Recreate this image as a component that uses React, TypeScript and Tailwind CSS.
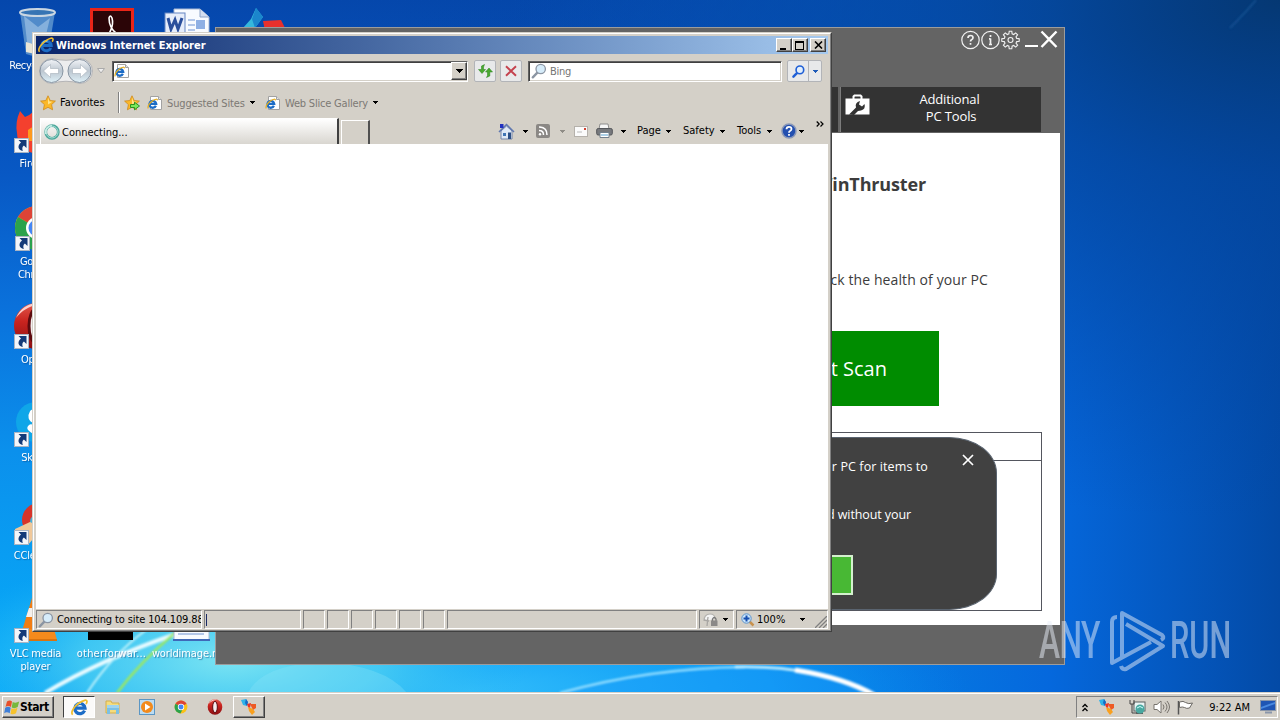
import type { ReactNode } from "react";

const ui = "font-['DejaVu_Sans_Condensed','DejaVu_Sans',sans-serif]";
const segoe = "font-['Open_Sans','Noto_Sans',sans-serif]";

/* ---------- shared icons ---------- */

function IELogo({ size = 16 }: { size?: number }) {
  return (
    <svg width={size} height={size} viewBox="0 0 16 16" className="shrink-0">
      <path d="M12.8 11A4.8 4.8 0 1 1 13.2 8.6H5.2" fill="none" stroke="#1c6cc6" strokeWidth="3" />
      <path d="M4.4 6.800A4 4 0 0 1 9.500 4.200" fill="none" stroke="#8fd4fb" strokeWidth="1.300" />
      <path d="M1.600 14.800C-.8 12.400 3 7 7.600 3.800 11.400 1.200 15.400 0 15 2.600c0 .8-.4 1.600-.8 2.200" fill="none" stroke="#f0bd2c" strokeWidth="1.600" />
    </svg>
  );
}

function IEPage() {
  return (
    <svg width="16" height="16" viewBox="0 0 16 16" className="shrink-0">
      <path d="M3.500 1.500h8l3 3v10h-11z" fill="#fff" stroke="#a2a2a2" />
      <path d="M11.500 1.500v3h3" fill="#e4e4e4" stroke="#a2a2a2" />
      <path d="M8.900 10.800A3.400 3.400 0 1 1 9.200 8.900H3.400" fill="none" stroke="#1c6cc6" strokeWidth="2.300" />
      <path d="M1.300 13.400C.2 11.400 2.600 7.800 5.600 5.800 8 4.200 10.700 3.400 10.400 5.400" fill="none" stroke="#e6ae20" strokeWidth="1.200" />
    </svg>
  );
}

function Caret({ className = "text-black" }: { className?: string }) {
  return (
    <svg width="5" height="3" viewBox="0 0 5 3" shapeRendering="crispEdges" className={`shrink-0 ${className}`}>
      <path d="M0 0h5L2.500 3z" fill="currentColor" />
    </svg>
  );
}

function Magnifier({ stroke = "#8b95a3", fill = "#d6ecfa", size = 16, weight = 1.3 }: { stroke?: string; fill?: string; size?: number; weight?: number }) {
  return (
    <svg width={size} height={size} viewBox="0 0 16 16" className="shrink-0">
      <path d="M6.600 9.400 1.800 14.400" stroke={stroke} strokeWidth={weight + 1} strokeLinecap="round" />
      <circle cx="9.700" cy="6" r="4.700" fill={fill} stroke={stroke} strokeWidth={weight} />
    </svg>
  );
}

function Star({ add = false }: { add?: boolean }) {
  return (
    <svg width="16" height="16" viewBox="0 0 16 16" className="shrink-0">
      <path d="M8 .8l2.200 4.700 5.200.6-3.800 3.500 1 5.200L8 12.300 3.400 14.800l1-5.200L.6 6.100l5.200-.6z" fill="#fbb829" stroke="#cf8a1c" strokeWidth=".8" />
      <path d="M8 2.600l1.400 3.800 3 .4L8 9.500z" fill="#ffe48c" />
      {add && <path d="M6.500 9.500h4V7.200l5 3.800-5 3.800v-2.300h-4z" fill="#7be85a" stroke="#1e8b1c" strokeWidth=".9" />}
    </svg>
  );
}

function ChromeLogo({ size }: { size: number }) {
  return (
    <svg width={size} height={size} viewBox="0 0 48 48">
      <circle cx="24" cy="24" r="22" fill="#fbc116" />
      <path d="M24 24 5 13A22 22 0 0 1 43 13z" fill="#dd4436" />
      <path d="M5 13A22 22 0 0 0 22 46l9-17-7-5z" fill="#2ba24c" />
      <circle cx="24" cy="24" r="11" fill="#fff" />
      <circle cx="24" cy="24" r="8.500" fill="#4486f4" />
    </svg>
  );
}

function OperaLogo({ size }: { size: number }) {
  return (
    <svg width={size} height={size} viewBox="0 0 48 48">
      <defs>
        <linearGradient id="opera" x1="0" y1="0" x2="0" y2="1">
          <stop offset="0" stopColor="#e0564a" />
          <stop offset=".4" stopColor="#c9241f" />
          <stop offset="1" stopColor="#8a0f12" />
        </linearGradient>
      </defs>
      <ellipse cx="24" cy="24" rx="22" ry="23" fill="url(#opera)" />
      <path d="M4 16C9 4 20 0 28 2 17 4 9 9 4 16z" fill="#fbd0cc" />
      <ellipse cx="24" cy="24" rx="7" ry="17" fill="#f4eeee" stroke="#5c0a0e" strokeWidth="3" />
    </svg>
  );
}

function ThrusterLogo({ size }: { size: number }) {
  return (
    <svg width={size} height={size} viewBox="0 0 16 16">
      <path d="M0 1 5 0 7 3 6 7 2 6z" fill="#2fb4ea" />
      <path d="M5 0 7 3 6 7 4 4z" fill="#1769c4" />
      <path d="M6 5 10 4 9 9 7 8z" fill="#e8352c" />
      <path d="M9 5 15 5 15 9 12 11z" fill="#ee5a24" />
      <path d="M7 8 12 10 14 13 11 16 8 12z" fill="#f9a01e" />
    </svg>
  );
}

/* ---------- desktop ---------- */

function Wallpaper() {
  return (
    <svg className="absolute inset-0" width="1280" height="693" viewBox="0 0 1280 693" preserveAspectRatio="none">
      <defs>
        <linearGradient id="sky" x1="0" y1="0" x2="0" y2="1">
          <stop offset="0" stopColor="#0547ac" />
          <stop offset=".25" stopColor="#0858c4" />
          <stop offset=".45" stopColor="#0a72dc" />
          <stop offset=".65" stopColor="#0b90ec" />
          <stop offset="1" stopColor="#06aefa" />
        </linearGradient>
        <linearGradient id="dusk" x1="0" y1="0" x2="1" y2="0">
          <stop offset=".4" stopColor="#0560d0" stopOpacity="0" />
          <stop offset=".82" stopColor="#0566dc" stopOpacity=".97" />
          <stop offset="1" stopColor="#034aa6" />
        </linearGradient>
        <radialGradient id="corner" cx="1" cy="0" r=".75">
          <stop offset="0" stopColor="#053873" />
          <stop offset=".35" stopColor="#04449a" stopOpacity=".75" />
          <stop offset="1" stopColor="#0448a8" stopOpacity="0" />
        </radialGradient>
        <radialGradient id="glow">
          <stop offset="0" stopColor="#7be4f2" />
          <stop offset=".5" stopColor="#4fd2f2" stopOpacity=".75" />
          <stop offset="1" stopColor="#1ab0f5" stopOpacity="0" />
        </radialGradient>
        <radialGradient id="haze">
          <stop offset="0" stopColor="#32bcfa" />
          <stop offset=".6" stopColor="#14a0f8" stopOpacity=".7" />
          <stop offset="1" stopColor="#0a80f0" stopOpacity="0" />
        </radialGradient>
        <filter id="soft"><feGaussianBlur stdDeviation="1.1" /></filter>
      </defs>
      <rect width="1280" height="693" fill="url(#sky)" />
      <rect width="1280" height="693" fill="url(#dusk)" />
      <rect width="1280" height="693" fill="url(#corner)" />
      <ellipse cx="470" cy="690" rx="500" ry="100" fill="url(#haze)" />
      <ellipse cx="230" cy="660" rx="300" ry="110" fill="url(#glow)" />
      <path d="M248 693Q262 664 325 662 385 666 407 693z" fill="#8fe6fa" opacity=".3" />
      <path d="M560 693Q650 668 745 667 820 668 876 693z" fill="#1a98fa" opacity=".4" />
      <g fill="none" filter="url(#soft)">
        <path d="M45 693Q100 660 176 634" stroke="#e8fbff" strokeWidth="4" />
        <path d="M87 693Q112 655 146 630" stroke="#bff2fb" strokeWidth="2" />
        <path d="M117 693Q140 662 176 632" stroke="#9be860" strokeWidth="2.500" />
        <path d="M560 693Q650 668 745 667" stroke="#8fdcff" strokeWidth="2.500" />
        <path d="M735 667Q780 666 810 673" stroke="#c4efff" strokeWidth="3" />
        <path d="M795 670Q845 678 874 695" stroke="#fff" strokeWidth="5" />
        <path d="M1230 28Q1246 12 1256 0" stroke="#2a66a8" strokeWidth="1.500" opacity=".6" />
      </g>
    </svg>
  );
}

function ShortcutArrow() {
  return (
    <svg className="absolute left-[2px] top-[32px]" width="15" height="15" viewBox="0 0 15 15">
      <rect x=".5" y=".5" width="14" height="14" fill="#f4f6fa" stroke="#a9b4c4" />
      <path d="M4.500 2h8v8L9.900 7.600C8.200 8.800 8 10.600 8.800 13 4 12.400 3 7.800 7 4.600z" fill="#143a78" />
    </svg>
  );
}

type DesktopIconProps = { place: string; label: string; spacing?: string; shortcut?: boolean; children: ReactNode };

function DesktopIcon({ place, label, spacing = "tracking-[-0.1px]", shortcut, children }: DesktopIconProps) {
  return (
    <div className={`absolute flex w-[75px] flex-col items-center text-center ${place}`}>
      <div className="relative h-[48px] w-[48px]">
        {children}
        {shortcut && <ShortcutArrow />}
      </div>
      <span className={`mt-[3px] whitespace-pre text-[11px] leading-[13px] text-white [text-shadow:1px_1px_1px_#0a3c7880] ${spacing}`}>{label}</span>
    </div>
  );
}

function WordDoc() {
  return (
    <svg width="48" height="48" viewBox="0 0 48 48">
      <path d="M10 1h26l9 8v35H10z" fill="#f8fbff" stroke="#a8b8d4" />
      <path d="M36 1v8h9" fill="#d3def0" stroke="#8ea4c8" />
      <path d="M24 12h7M24 17h7M24 22h7M14 28h26M14 33h26M14 38h26" stroke="#6f93d2" />
      <rect x="32" y="12" width="9" height="9" fill="#8fb0e4" />
      <rect x="1" y="5" width="20" height="20" fill="#e6edfa" stroke="#6485c2" />
      <path d="M4 10l3 11 4-9 3 9 4-11" fill="none" stroke="#2a4f9c" strokeWidth="3" />
      <path d="M9 44h37" stroke="#3f69b8" strokeWidth="2" />
    </svg>
  );
}

function DesktopIcons() {
  return (
    <>
      <DesktopIcon place="left-[-2px] top-[8px]" label="Recycle Bin" spacing="tracking-[-0.4px]">
        <svg width="48" height="48" viewBox="0 0 48 48">
          <path d="M8 4 14 46Q24 50 36 46L43 4z" fill="#5f97cf" opacity=".85" />
          <path d="M12 8l4 34 8-14 6 16 8-34-12 9z" fill="#b9d5ee" opacity=".5" />
          <ellipse cx="25.500" cy="4.500" rx="17.500" ry="3.500" fill="#3674b4" stroke="#c9d6e2" strokeWidth="2" />
          <path d="M14 34l7 2 2 10-9-2z" fill="#e9e5d6" />
        </svg>
      </DesktopIcon>
      <DesktopIcon place="left-[74px] top-[8px]" label="">
        <svg width="48" height="48" viewBox="0 0 48 48">
          <rect x="3.500" y="1.500" width="41" height="44" fill="#2b0507" stroke="#ea2518" strokeWidth="3" />
          <path d="M16 31C22 27 26 17 24 10q-2-4-3 0c0 8 4 13 8 16" fill="none" stroke="#fff" strokeWidth="1.600" />
        </svg>
      </DesktopIcon>
      <DesktopIcon place="left-[150px] top-[8px]" label=""><WordDoc /></DesktopIcon>
      <DesktopIcon place="left-[225px] top-[8px]" label="">
        <svg width="48" height="48" viewBox="0 0 48 48">
          <path d="M17 0l7 9-8 11H4l8-9z" fill="#35b8dc" />
          <path d="M17 0l7 9-8 11-3-9z" fill="#1b86cc" />
          <path d="M24 13l18-1 4 8-10 9-10-6z" fill="#e8302c" />
        </svg>
      </DesktopIcon>
      <DesktopIcon place="left-[-2px] top-[106px]" label="Firefox" shortcut>
        <svg width="48" height="48" viewBox="0 0 48 48">
          <path d="M8 5l5 6q5-2 8-5 0 5 4 7 22-6 21 14a20 20 0 0 1-41 0Q3 16 8 5z" fill="#f4402e" />
          <path d="M16 24q6-6 14 0l-6 5 8 6H16z" fill="#ff9a1e" />
        </svg>
      </DesktopIcon>
      <DesktopIcon place="left-[-1px] top-[204px]" label={"Google\nChrome"} spacing="tracking-[-0.3px]" shortcut><ChromeLogo size={48} /></DesktopIcon>
      <DesktopIcon place="left-[-2px] top-[302px]" label="Opera" spacing="tracking-[-0.3px]" shortcut><OperaLogo size={48} /></DesktopIcon>
      <DesktopIcon place="left-[-2px] top-[400px]" label="Skype" spacing="tracking-[-0.3px]" shortcut>
        <svg width="48" height="48" viewBox="0 0 48 48">
          <circle cx="24" cy="22" r="20" fill="#0fa6e8" />
          <path d="M32 13q-6-4-11 0-3 5 2 7l7 2q5 4 0 8-6 3-11-2" fill="none" stroke="#fff" strokeWidth="7" strokeLinecap="round" />
        </svg>
      </DesktopIcon>
      <DesktopIcon place="left-[-2px] top-[498px]" label="CCleaner" spacing="tracking-[-0.2px]" shortcut>
        <svg width="48" height="48" viewBox="0 0 48 48">
          <circle cx="27" cy="22" r="17" fill="#d8342a" />
          <circle cx="27" cy="24" r="9" fill="#4ab2da" />
          <path d="M3 31 18 24l12 6-14 17H3z" fill="#f0c89a" />
        </svg>
      </DesktopIcon>
      <DesktopIcon place="left-[-2px] top-[596px]" label={"VLC media\nplayer"} spacing="tracking-[-0.2px]" shortcut>
        <svg width="48" height="48" viewBox="0 0 48 48">
          <path d="M20 2h8l10 33H10z" fill="#f27d13" />
          <path d="M17 12h14l3 9H14z" fill="#f4f0ec" />
          <path d="M8 33h34l3 11H3z" fill="#f58a1c" />
          <path d="M3 44h42" stroke="#d9730f" strokeWidth="2" />
        </svg>
      </DesktopIcon>
      <DesktopIcon place="left-[74px] top-[596px]" label="otherforwar..." spacing="tracking-[0.2px]">
        <div className="h-[44px] w-[45px] bg-black" />
      </DesktopIcon>
      <DesktopIcon place="left-[150px] top-[596px]" label="worldimage.rtf" spacing="tracking-[-0.1px]"><WordDoc /></DesktopIcon>
    </>
  );
}

/* ---------- WinThruster ---------- */

function ThrusterHeader() {
  return (
    <div className="flex h-[59px] items-start justify-end gap-[1px] pr-[5px] pt-[2px] text-[#f2f2f2]">
      <svg width="19" height="20" viewBox="0 0 19 20" fill="none" stroke="currentColor">
        <circle cx="9.500" cy="10" r="8.700" strokeWidth="1.200" />
        <path d="M7 8q0-2.500 2.500-2.500T12 7.700q0 1.300-1.500 2-1 .6-1 1.800M9.500 13v1.800" strokeWidth="1.700" />
      </svg>
      <svg width="19" height="20" viewBox="0 0 19 20" fill="none" stroke="currentColor">
        <circle cx="9.500" cy="10" r="8.700" strokeWidth="1.200" />
        <path d="M9.500 8.500v6M9.500 5v2M8 8.800h1.500M8 14.500h3" strokeWidth="1.700" />
      </svg>
      <svg width="19" height="20" viewBox="0 0 19 20" fill="none" stroke="currentColor" strokeWidth="1.100" className="mr-px">
        <path d="M8.200 1.300h2.600l.3 2.500 1.600.7 2-1.600 1.900 1.900-1.600 2 .7 1.600 2.500.3v2.600l-2.500.3-.7 1.600 1.600 2-1.900 1.900-2-1.600-1.600.7-.3 2.500H8.200l-.3-2.500-1.600-.7-2 1.600-1.900-1.900 1.600-2-.7-1.600-2.500-.3V8.700l2.500-.3.700-1.600-1.600-2 1.900-1.900 2 1.600 1.600-.7z" />
        <circle cx="9.500" cy="10" r="2.500" />
      </svg>
      <svg width="16" height="20" viewBox="0 0 16 20"><path d="M3 16h13" stroke="#fff" strokeWidth="2" /></svg>
      <svg width="20" height="20" viewBox="0 0 20 20"><path d="M2.500 1.500l15 15.500M17.500 1.500l-15 15.500" stroke="#fff" strokeWidth="2.400" /></svg>
    </div>
  );
}

function ThrusterWindow() {
  return (
    <div className={`absolute left-[215px] top-[27px] flex h-[638px] w-[850px] flex-col border border-[#9c9c9c] bg-[#646464] ${segoe}`}>
      <ThrusterHeader />
      <div className="flex h-[46px] justify-end gap-[3px] pr-[23px] pb-px text-white">
        <div className="w-[199px] bg-[#333]" />
        <div className="flex w-[200px] items-start bg-[#333] pl-[4px] pt-[7px] shadow-[-1px_0_0_#7c7c7c]">
          <svg width="25" height="22" viewBox="0 0 25 22" className="shrink-0">
            <path d="M8.500 5V2.500l1-1h6l1 1V5" fill="none" stroke="#fff" strokeWidth="2" />
            <path d="M.5 4.500h24v16H.5z" fill="#fff" />
            <path d="M4 20.500l7-7q-1.500-5 4-6.500l-1 3.500 3 2 2.500-2.500q1.500 5-3.500 6.500l-3 .5-4 4z" fill="#333" />
          </svg>
          <div className="-mt-[3px] ml-[2px] flex-1 whitespace-pre pr-[14px] text-center text-[13px] leading-[17px] tracking-[-0.150px]">{"Additional\n PC Tools"}</div>
        </div>
      </div>
      <div className="mr-[4px] ml-[4px] flex h-[492px] flex-col bg-white pr-[18px] text-[#3c3c3c]">
        <div className="mt-[37px] h-[28px] pr-[116px] text-right text-[18px] font-bold leading-[28px] tracking-[-0.150px]">WinThruster</div>
        <div className="mt-[70px] h-[24px] pr-[54px] text-right text-[14px] leading-[24px] tracking-[0.1px]">Check the health of your PC</div>
        <div className="mt-[39px] mr-[103px] flex h-[75px] w-[230px] items-center justify-end self-end bg-[#008c00] pr-[52px] text-[20px] text-white">Start Scan</div>
        <div className="relative mt-[26px] h-[179px] border border-[#54565e]">
          <div className="h-[28px] border-b border-[#54565e]" />
          <div className="absolute right-[44px] top-[4px] flex h-[173px] w-[400px] flex-col rounded-[48px/36px] border border-[#5a6470] bg-[#414141] text-[12.500px] leading-[18px] text-white">
            <div className="mt-[20px] pr-[68px] text-right tracking-[0.1px]">scan your PC for items to</div>
            <div className="mt-[30px] pr-[85px] text-right tracking-[-0.1px]">removed without your</div>
            <div className="mt-[31px] mr-[143px] h-[40px] w-[120px] self-end border-2 border-[#d4f0ce] bg-[#48b834]" />
            <svg className="absolute right-[22px] top-[16px]" width="12" height="12" viewBox="0 0 12 12">
              <path d="M1 1l10 10M11 1 1 11" stroke="#fff" strokeWidth="1.700" />
            </svg>
          </div>
        </div>
      </div>
    </div>
  );
}

/* ---------- Internet Explorer ---------- */

function CaptionButton({ children }: { children: ReactNode }) {
  return (
    <div className="flex h-[14px] w-[16px] items-center justify-center border border-b-[#404040] border-l-white border-r-[#404040] border-t-white bg-[#d4d0c8] shadow-[inset_-1px_-1px_0_#808080]">
      {children}
    </div>
  );
}

function TitleBar() {
  return (
    <div className="flex h-[18px] items-center bg-gradient-to-r from-[#0a246a] to-[#a6caf0] pl-[2px] pr-[2px]">
      <IELogo />
      <span className="ml-[2px] flex-1 whitespace-nowrap pt-px text-[11px] font-bold leading-[18px] text-white">Windows Internet Explorer</span>
      <CaptionButton><svg width="10" height="9" viewBox="0 0 10 9" shapeRendering="crispEdges"><path d="M1 7h6v2H1z" /></svg></CaptionButton>
      <CaptionButton>
        <svg width="10" height="9" viewBox="0 0 10 9" shapeRendering="crispEdges"><path d="M0 0h9v9H0zM1 2v6h7V2z" fillRule="evenodd" /></svg>
      </CaptionButton>
      <div className="ml-[2px]">
        <CaptionButton><svg width="9" height="8" viewBox="0 0 9 8"><path d="M1 .5l7 7M8 .5l-7 7" stroke="#000" strokeWidth="1.600" /></svg></CaptionButton>
      </div>
    </div>
  );
}

function NavArrows() {
  return (
    <svg width="56" height="28" viewBox="0 0 56 28" className="shrink-0">
      <defs>
        <linearGradient id="orb" x1="0" y1="0" x2="0" y2="1">
          <stop offset="0" stopColor="#f2f4f7" />
          <stop offset=".5" stopColor="#bcc6d0" />
          <stop offset="1" stopColor="#dff1f8" />
        </linearGradient>
      </defs>
      <path d="M14 1.500Q28 5 42 1.500A12.500 12.500 0 0 1 42 26.500Q28 22 14 26.500A12.500 12.500 0 0 1 14 1.500z" fill="#ededee" stroke="#b4b4b6" />
      <circle cx="13.500" cy="14" r="11.500" fill="url(#orb)" stroke="#8794a2" />
      <circle cx="41.500" cy="14" r="11.500" fill="url(#orb)" stroke="#8794a2" />
      <path d="M5.500 14l7-6.500v4h8v5h-8v4zM49.500 14l-7-6.500v4h-8v5h8v4z" fill="#fff" stroke="#a6b0ba" strokeWidth=".6" />
    </svg>
  );
}

const field = "flex items-center border border-b-white border-l-[#606060] border-r-white border-t-[#606060] bg-white shadow-[inset_1px_1px_0_#404040,inset_-1px_-1px_0_#d4d0c8]";
const toolButton = "flex h-[22px] items-center justify-center rounded-[2px] border border-[#b2b4b8] bg-[#e8e9ea]";

function AddressRow() {
  return (
    <div className="flex h-[34px] items-center pl-[2px]">
      <NavArrows />
      <svg width="8" height="6" viewBox="0 0 8 6" className="ml-[3px]"><path d="M.5.500h7l-3.500 4.500z" fill="#eee" stroke="#aaa" /></svg>
      <div className={`ml-[7px] h-[21px] w-[356px] pl-px ${field}`}>
        <IEPage />
        <div className="mr-0 ml-auto flex h-[18px] w-[16px] items-center justify-center border border-b-[#404040] border-l-white border-r-[#404040] border-t-white bg-[#d4d0c8] shadow-[inset_-1px_-1px_0_#808080]">
          <svg width="7" height="4" viewBox="0 0 7 4" shapeRendering="crispEdges"><path d="M0 0h7L3.500 4z" /></svg>
        </div>
      </div>
      <div className={`ml-[6px] w-[22px] ${toolButton}`}>
        <svg width="15" height="14" viewBox="0 0 15 14">
          <path d="M6.500.500 3.500 2v3.500H.5L4 9.500l3.500-4H5.500V3z" fill="#49a92e" stroke="#24801a" strokeWidth=".5" />
          <path d="M8.500 13.500 11.800 12V8h2.700L11 4 7.500 8h2v3.500z" fill="#49a92e" stroke="#24801a" strokeWidth=".5" />
        </svg>
      </div>
      <div className={`ml-[4px] w-[22px] ${toolButton}`}>
        <svg width="12" height="12" viewBox="0 0 12 12"><path d="M1 1.200l10 9.600M11 1.200 1 10.800" stroke="#c4424e" strokeWidth="1.900" /></svg>
      </div>
      <div className={`ml-[6px] h-[21px] w-[254px] pl-[2px] ${field}`}>
        <Magnifier />
        <span className="ml-[3px] pt-[3px] text-[11px] tracking-[-0.3px] text-[#757575]">Bing</span>
      </div>
      <div className={`ml-[5px] w-[35px] ${toolButton}`}>
        <span className="flex h-full w-[21px] items-center justify-center border-r border-[#b2b4b8]"><Magnifier stroke="#1f5fd6" fill="#e2effc" size={13} weight={2} /></span>
        <span className="flex flex-1 justify-center"><Caret className="text-[#1e5bb8]" /></span>
      </div>
    </div>
  );
}

function FavoritesRow() {
  return (
    <div className="flex h-[29px] items-center pl-[4px] text-[11px]">
      <Star />
      <span className="ml-[4px] w-[50px] whitespace-nowrap pt-px text-black">Favorites</span>
      <span className="ml-[8px] h-[21px] w-[2px] border-l border-r border-l-[#808080] border-r-white" />
      <span className="ml-[4px]"><Star add /></span>
      <span className="ml-[7px]"><IEPage /></span>
      <span className="ml-[4px] w-[79px] whitespace-nowrap pt-[3px] tracking-[-0.150px] text-[#7c7974]">Suggested Sites</span>
      <span className="ml-[4px]"><Caret /></span>
      <span className="ml-[10px]"><IEPage /></span>
      <span className="ml-[4px] w-[84px] whitespace-nowrap pt-[3px] tracking-[-0.2px] text-[#7c7974]">Web Slice Gallery</span>
      <span className="ml-[4px]"><Caret /></span>
    </div>
  );
}

function CommandBar() {
  return (
    <div className="flex h-[26px] flex-1 items-center justify-end pr-[4px] text-[11px] text-black">
      <svg width="17" height="17" viewBox="0 0 17 17">
        <path d="M3 8v8h11V8L8.500 3z" fill="#dfe9f6" stroke="#7686a8" />
        <path d="M1 9l7.500-7.500L16 9" fill="none" stroke="#6078b0" strokeWidth="1.500" />
        <path d="M2 1h3.500v4H2z" fill="#2030c0" />
        <path d="M10 9.500h3V16h-3z" fill="#2c4f86" /><path d="M5 10h3v3H5z" fill="#3f74b4" />
      </svg>
      <span className="ml-[8px]"><Caret /></span>
      <svg width="14" height="14" viewBox="0 0 14 14" className="ml-[8px]">
        <rect width="14" height="14" rx="2" fill="#8b8885" />
        <path d="M3 6.500q4.500 0 4.500 4.500M3 3q8 0 8 8" fill="none" stroke="#fff" strokeWidth="1.500" />
        <circle cx="4" cy="10.300" r="1.200" fill="#fff" />
      </svg>
      <span className="ml-[10px]"><Caret className="text-[#8f8c86]" /></span>
      <svg width="14" height="11" viewBox="0 0 14 11" className="ml-[9px]">
        <rect x=".5" y=".5" width="13" height="10" fill="#fbfbfb" stroke="#b5b1ab" />
        <path d="M10 2h2v2h-2z" fill="#d04030" /><path d="M3 6h5" stroke="#bbb" />
      </svg>
      <svg width="17" height="16" viewBox="0 0 17 16" className="ml-[8px]">
        <path d="M4 1h8l1 5H3z" fill="#f6f6f6" stroke="#8c8c8c" />
        <rect x=".7" y="5.500" width="15.600" height="6.500" rx="1.500" fill="#77797d" stroke="#55575b" />
        <path d="M4 9.500h9v5H4z" fill="#fff" stroke="#73808d" /><path d="M5 12h7" stroke="#58a0d0" />
      </svg>
      <span className="ml-[8px]"><Caret /></span>
      <span className="ml-[11px] w-[25px]">Page</span>
      <span className="ml-[4px]"><Caret /></span>
      <span className="ml-[12px] w-[33px]">Safety</span>
      <span className="ml-[4px]"><Caret /></span>
      <span className="ml-[12px] w-[27px]">Tools</span>
      <span className="ml-[3px]"><Caret /></span>
      <svg width="16" height="16" viewBox="0 0 16 16" className="ml-[9px]">
        <circle cx="8" cy="8" r="7" fill="#2450b0" stroke="#8a98b8" strokeWidth="1.500" />
        <path d="M5.500 6.300q0-2.500 2.500-2.500t2.500 2.200q0 1.200-1.500 2Q8 8.500 8 9.700M8 11v1.800" fill="none" stroke="#fff" strokeWidth="1.800" />
      </svg>
      <span className="ml-[2px]"><Caret /></span>
      <svg width="8" height="6" viewBox="0 0 8 6" className="-mt-[14px] ml-[12px]"><path d="M.7.500 3.200 3 .7 5.500M4.500.500 7 3 4.500 5.500" fill="none" stroke="#000" strokeWidth="1.200" /></svg>
    </div>
  );
}

function TabRow() {
  return (
    <div className="flex h-[27px] items-end pl-[4px]">
      <div className="flex h-[26px] w-[299px] items-center border-l border-r-2 border-t border-l-white border-r-[#404040] border-t-white bg-gradient-to-b from-white to-[#d9d6d0] pl-[3px] text-[11px] text-black">
        <svg width="16" height="16" viewBox="0 0 16 16">
          <circle cx="8" cy="8" r="6.300" fill="none" stroke="#4aa69a" strokeWidth="2.800" />
          <circle cx="8" cy="8" r="6" fill="none" stroke="#a5dcd2" strokeWidth="1" />
          <path d="M8 1.700A6.300 6.300 0 0 0 2 10" fill="none" stroke="#c4ece4" strokeWidth="1.800" />
        </svg>
        <span className="ml-[2px] pt-[3px]">Connecting...</span>
      </div>
      <div className="ml-[2px] h-[24px] w-[29px] border-l border-r-2 border-t border-l-white border-r-[#505050] border-t-white" />
      <CommandBar />
    </div>
  );
}

const well = "h-[19px] border border-b-white border-l-[#808080] border-r-white border-t-[#808080]";

function StatusBar() {
  return (
    <div className="flex h-[20px] items-center pt-px text-[11px] text-black">
      <div className={`flex w-[166px] items-center overflow-hidden whitespace-nowrap pl-[1px] ${well}`}>
        <Magnifier />
        <span className="ml-[3px] pt-px tracking-[-0.120px]">Connecting to site 104.109.88</span>
      </div>
      <div className={`ml-[2px] flex w-[97px] items-center pl-px ${well}`}><span className="h-[12px] w-px bg-[#1c2c66]" /></div>
      {[0, 1, 2, 3, 4, 5].map((i) => (
        <div key={i} className={`ml-[2px] w-[22px] ${well}`} />
      ))}
      <div className={`ml-[2px] w-[250px] ${well}`} />
      <div className={`ml-[2px] flex w-[35px] items-center pl-[3px] ${well}`}>
        <svg width="16" height="15" viewBox="0 0 16 15">
          <path d="M1 9q0-7 6-7 5 0 5 5" fill="#f4f4f4" stroke="#b4b2ae" strokeWidth="1.200" />
          <path d="M4 14 5 5M1 8l5 1" stroke="#a8a6a3" strokeWidth="1.300" />
          <path d="M9.500 9V7q1.800-3 3.500 0v2" fill="none" stroke="#777" strokeWidth="1.300" /><rect x="8" y="8.500" width="6.500" height="5.500" fill="#8b8987" />
        </svg>
        <span className="ml-[4px]"><Caret /></span>
      </div>
      <div className={`ml-[2px] flex flex-1 items-center pl-[4px] ${well}`}>
        <svg width="14" height="14" viewBox="0 0 14 14">
          <path d="M8 8l4.500 4.500" stroke="#c8924e" strokeWidth="2.500" />
          <circle cx="5.500" cy="5.500" r="4.700" fill="#c9e4fa" stroke="#5c93cc" /><path d="M5.500 2.500v6M2.500 5.500h6" stroke="#174fb0" strokeWidth="2" />
        </svg>
        <span className="ml-[2px] w-[31px] pt-px">100%</span>
        <span className="ml-[12px]"><Caret /></span>
        <svg width="12" height="12" viewBox="0 0 12 12" className="mt-auto ml-auto"><path d="M0 12 12 0M4 12l8-8M8 12l4-4" stroke="#808080" strokeWidth="1.300" /></svg>
      </div>
    </div>
  );
}

function ExplorerWindow() {
  return (
    <div className="absolute left-[32px] top-[32px] h-[600px] w-[800px] border border-b-[#404040] border-l-[#d4d0c8] border-r-[#404040] border-t-[#d4d0c8]">
      <div className="flex h-full flex-col border border-b-[#808080] border-l-white border-r-[#808080] border-t-white bg-[#d4d0c8] p-[2px] pb-px">
        <TitleBar />
        <AddressRow />
        <FavoritesRow />
        <TabRow />
        <div className="flex-1 bg-white" />
        <StatusBar />
      </div>
    </div>
  );
}

/* ---------- watermark + taskbar ---------- */

function Watermark() {
  return (
    <div className="absolute left-[1039px] top-[609px] flex items-center font-['Roboto',sans-serif] text-[52px] leading-[64px] text-[#e8eef8] opacity-50">
      <span className="w-[67px] origin-left scale-x-[.61] font-medium tracking-[-1px]">ANY</span>
      <svg width="58" height="64" viewBox="0 0 58 64" fill="none" stroke="currentColor" strokeWidth="4" strokeLinejoin="round" className="ml-[2px]">
        <path d="M9 8Q4 8 4 13v41L43 33M14 49V4l40 22q3 3-1 5M18 15l37 22L18 60q-4 1-5-3" />
      </svg>
      <span className="ml-[4px] w-[64px] origin-left scale-x-[.59] font-medium">RUN</span>
    </div>
  );
}

const raised = "border border-b-[#404040] border-l-white border-r-[#404040] border-t-white shadow-[inset_-1px_-1px_0_#808080]";

function Taskbar() {
  return (
    <div className="flex h-[28px] items-center border-t border-[#d4d0c8] bg-[#d4d0c8] pr-[2px] pl-[2px] shadow-[inset_0_1px_0_#fff]">
      <div className={`mt-[1px] flex h-[22px] w-[52px] items-center pl-[1px] text-[12px] font-bold text-black ${raised}`}>
        <svg width="16" height="15" viewBox="0 0 16 15" className="shrink-0">
          <path d="M3 1.500q3-2 5 0L7 7q-3-2-5.500 0z" fill="#e8502a" /><path d="M8.700 2q3 1.500 6.500-.5l-1.500 5.500q-3 2-6 .5z" fill="#77b83c" />
          <path d="M1.200 7.700q3-2 5.500 0l-1 5.500q-3-2-5.500 0z" fill="#3f7fd8" /><path d="M7.500 8.200q3 1.500 6-.5L12 13.200q-3 2-5.500.500z" fill="#f6c22c" />
        </svg>
        <span className="tracking-[-0.4px]">Start</span>
      </div>
      <div className="mt-[1px] ml-[9px] flex h-[22px] w-[32px] items-center justify-center border border-b-white border-l-[#404040] border-r-white border-t-[#404040] bg-[#fbfaf9]"><IELogo size={17} /></div>
      <svg width="16" height="16" viewBox="0 0 16 16" className="mt-[1px] ml-[10px]">
        <path d="M1 2h5l1 2h7v10H1z" fill="#f5dc7c" stroke="#d3ae4c" /><path d="M2 6h12v4H2z" fill="#9fd4ee" />
        <path d="M2 15V9h12v6h-3v-4H5v4z" fill="#7cc0e4" />
      </svg>
      <svg width="17" height="17" viewBox="0 0 17 17" className="mt-[1px] ml-[18px]">
        <rect x=".5" y=".5" width="15" height="15" fill="#bcdcf2" stroke="#5b96c4" /><circle cx="8" cy="8" r="6" fill="#f28a1c" /><path d="M6 4.500v7L11.500 8z" fill="#fff" />
      </svg>
      <div className="mt-[1px] ml-[18px]"><ChromeLogo size={14} /></div>
      <div className="mt-[1px] ml-[19px]"><OperaLogo size={16} /></div>
      <div className={`mt-[1px] ml-[10px] flex h-[22px] w-[32px] items-center justify-center ${raised}`}><ThrusterLogo size={16} /></div>
      <div className="mt-[1px] ml-auto flex h-[22px] w-[202px] items-center border border-b-white border-l-[#808080] border-r-white border-t-[#808080] pl-[5px] text-[11px] text-black">
        <svg width="6" height="9" viewBox="0 0 6 9"><path d="M.5 4 3 1.500 5.500 4M.5 8 3 5.500 5.500 8" fill="none" stroke="#000" strokeWidth="1.300" /></svg>
        <span className="ml-[11px]"><ThrusterLogo size={16} /></span>
        <svg width="17" height="16" viewBox="0 0 17 16" className="ml-[14px]">
          <rect x="5" y="3" width="11" height="9" fill="#e9f4f4" stroke="#5a6060" /><path d="M7 14h7" stroke="#5a6060" strokeWidth="2" />
          <circle cx="11" cy="10" r="4.500" fill="#48a8a0" /><path d="M8 9q3-3 6 0" stroke="#cff" fill="none" />
          <path d="M1 1v4h4V1M3 5v9h4" fill="none" stroke="#444" />
        </svg>
        <svg width="17" height="14" viewBox="0 0 17 14" fill="none" stroke="#77736d" className="ml-[7px]">
          <path d="M1 4.500h3L8 1v12L4 9.500H1z" fill="#fff" /><path d="M10 4.500q2 2.500 0 5M12 2.500q4 4.500 0 9M14 1q5 6 0 12" />
        </svg>
        <svg width="17" height="15" viewBox="0 0 17 15" className="ml-[7px]">
          <path d="M1.500 1v13.500" stroke="#555" strokeWidth="1.500" /><path d="M2.500 2q4-1.500 6 .5 3 2 7 .5l-3 5q-3 1-5-.5-2-1-5 0z" fill="#fff" stroke="#6b6863" />
        </svg>
        <span className="ml-auto whitespace-nowrap pt-[2px]">9:22 AM</span>
        <svg width="16" height="14" viewBox="0 0 16 14" className="mr-[1px] ml-[10px]">
          <rect x=".5" y=".5" width="15" height="10" fill="#1f55b4" stroke="#8a96aa" /><path d="M1 7 15 2v2L1 9z" fill="#4a8ae0" /><path d="M5 12.500h7" stroke="#8a96aa" strokeWidth="2" />
        </svg>
      </div>
    </div>
  );
}

export default function App() {
  return (
    <div className={`flex h-[720px] w-[1280px] flex-col overflow-hidden ${ui}`}>
      <div className="relative flex-1 overflow-hidden">
        <Wallpaper />
        <DesktopIcons />
        <ThrusterWindow />
        <ExplorerWindow />
        <Watermark />
      </div>
      <Taskbar />
    </div>
  );
}
